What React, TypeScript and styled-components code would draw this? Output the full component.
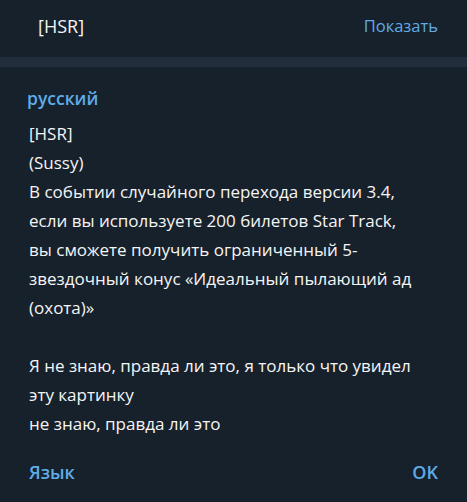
import styled, { createGlobalStyle } from "styled-components";

const Global = createGlobalStyle`
  html, body {
    margin: 0;
    padding: 0;
    background: #17212b;
  }
  body {
    font-family: "Open Sans", "Noto Sans", sans-serif;
    -webkit-font-smoothing: antialiased;
  }
`;

const Page = styled.div`
  width: 467px;
  height: 502px;
  background: #17212b;
  display: flex;
  flex-direction: column;
  overflow: hidden;
`;

const Header = styled.header`
  height: 57px;
  display: flex;
  align-items: center;
  justify-content: space-between;
  padding: 0 29px 6px 38px;
  box-sizing: border-box;
`;

const Title = styled.span`
  color: #f5f5f5;
  font-size: 18px;
`;

const LinkButton = styled.span<{ $bold?: boolean }>`
  color: #5eabe8;
  font-size: ${({ $bold }) => ($bold ? "18px" : "16.5px")};
  font-weight: ${({ $bold }) => ($bold ? 600 : 400)};
  cursor: pointer;
`;

const Divider = styled.div`
  height: 10px;
  background: #232e3c;
`;

const Body = styled.section`
  flex: 1;
  display: flex;
  flex-direction: column;
  padding: 20px 29px 0 29px;
`;

const Language = styled.div`
  color: #5eabe8;
  font-size: 17.5px;
  font-weight: 600;
  line-height: 22px;
  margin-left: -2px;
`;

const Text = styled.p`
  margin: 10px 0 0;
  color: #f5f5f5;
  font-size: 17px;
  line-height: 29px;
  white-space: pre-line;
`;

const Footer = styled.footer`
  display: flex;
  justify-content: space-between;
  align-items: center;
  padding: 0 29px 0 29px;
  height: 60px;
`;

const message = `[HSR]
(Sussy)
В событии случайного перехода версии 3.4,
если вы используете 200 билетов Star Track,
вы сможете получить ограниченный 5-
звездочный конус «Идеальный пылающий ад
(охота)»

Я не знаю, правда ли это, я только что увидел
эту картинку
не знаю, правда ли это`;

export default function App() {
  return (
    <Page>
      <Global />
      <Header>
        <Title>[HSR]</Title>
        <LinkButton>Показать</LinkButton>
      </Header>
      <Divider />
      <Body>
        <Language>русский</Language>
        <Text>{message}</Text>
      </Body>
      <Footer>
        <LinkButton $bold>Язык</LinkButton>
        <LinkButton $bold>OK</LinkButton>
      </Footer>
    </Page>
  );
}
